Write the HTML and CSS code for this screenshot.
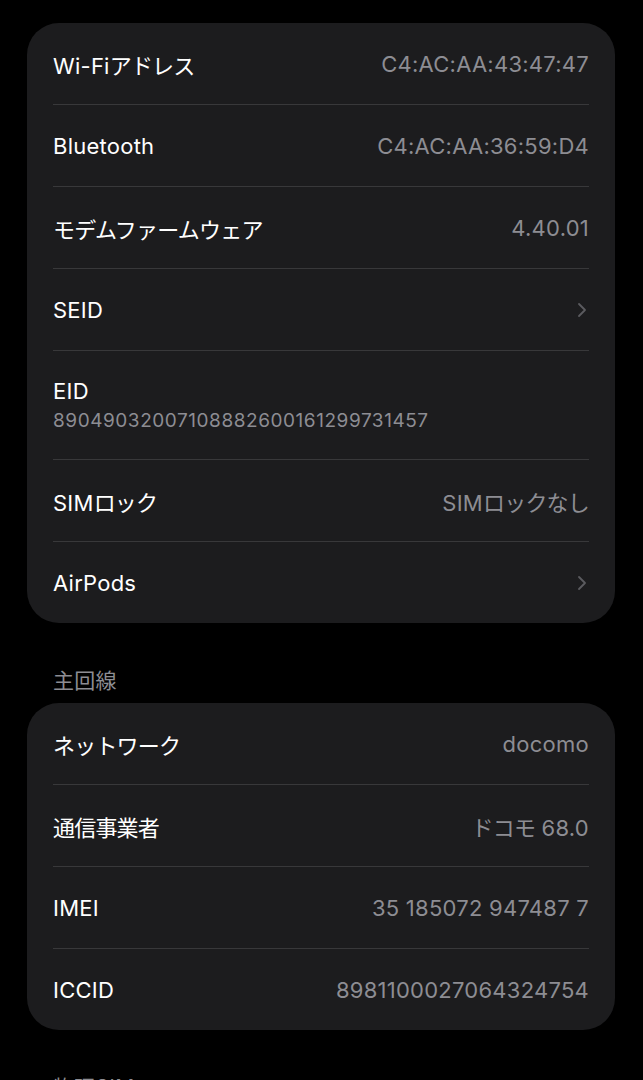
FILE: index.html
```html
<!DOCTYPE html>
<html lang="ja">
<head>
<meta charset="utf-8">
<link rel="stylesheet" href="styles.css">
</head>
<body>
<main class="page">
  <section class="card">
    <div class="row"><span class="label">Wi-Fi<span class="ja">アドレス</span></span><span class="value">C4:AC:AA:43:47:47</span></div>
    <div class="row"><span class="label">Bluetooth</span><span class="value">C4:AC:AA:36:59:D4</span></div>
    <div class="row"><span class="label"><span class="ja">モデムファームウェア</span></span><span class="value">4.40.01</span></div>
    <div class="row"><span class="label">SEID</span><svg class="chev" viewBox="0 0 10 16" width="10" height="16"><path d="M2 2 L8 8 L2 14" fill="none" stroke="currentColor" stroke-width="1.8" stroke-linecap="round" stroke-linejoin="round"/></svg></div>
    <div class="row stacked"><span class="label">EID</span><span class="sub">89049032007108882600161299731457</span></div>
    <div class="row"><span class="label">SIM<span class="ja">ロック</span></span><span class="value">SIM<span class="ja">ロックなし</span></span></div>
    <div class="row"><span class="label">AirPods</span><svg class="chev" viewBox="0 0 10 16" width="10" height="16"><path d="M2 2 L8 8 L2 14" fill="none" stroke="currentColor" stroke-width="1.8" stroke-linecap="round" stroke-linejoin="round"/></svg></div>
  </section>
  <h2 class="header">主回線</h2>
  <section class="card">
    <div class="row"><span class="label"><span class="ja">ネットワーク</span></span><span class="value">docomo</span></div>
    <div class="row"><span class="label"><span class="ja">通信事業者</span></span><span class="value"><span class="ja">ドコモ</span> 68.0</span></div>
    <div class="row"><span class="label">IMEI</span><span class="value">35 185072 947487 7</span></div>
    <div class="row"><span class="label">ICCID</span><span class="value">8981100027064324754</span></div>
  </section>
  <h2 class="header">物理SIM</h2>
</main>
</body>
</html>
```
FILE: styles.css
```css
html, body {
  margin: 0;
  padding: 0;
  background: #000;
}
body {
  font-family: Inter, "Noto Sans CJK JP", sans-serif;
  color: #fff;
}
.page {
  padding: 23px 28px 0 27px;
}
.card {
  background: #1c1c1e;
  border-radius: 32px;
  padding: 0 26px;
}
.row {
  height: 81px;
  display: flex;
  align-items: center;
  justify-content: space-between;
  border-bottom: 1px solid #38383a;
  box-sizing: content-box;
}
.row:last-child {
  border-bottom: none;
}
.label,
.value {
  font-size: 22px;
  letter-spacing: 0.25px;
  white-space: nowrap;
}
.label {
  color: #fff;
}
.value {
  color: #8d8d93;
}
.ja {
  letter-spacing: -0.8px;
}
.label .ja:not(:first-child),
.value .ja:not(:first-child) {
  margin-left: 2px;
}
.chev {
  color: #5b5b5f;
  margin-right: 2px;
}
.row.stacked {
  height: 108px;
  flex-direction: column;
  align-items: flex-start;
  justify-content: center;
  gap: 5px;
}
.sub {
  font-size: 19px;
  color: #8d8d93;
  letter-spacing: 0.55px;
}
.header {
  margin: 0;
  padding: 46px 26px 10px;
  font-size: 21px;
  line-height: 24px;
  font-weight: 400;
  color: #8d8d93;
  letter-spacing: 0.3px;
}
```
